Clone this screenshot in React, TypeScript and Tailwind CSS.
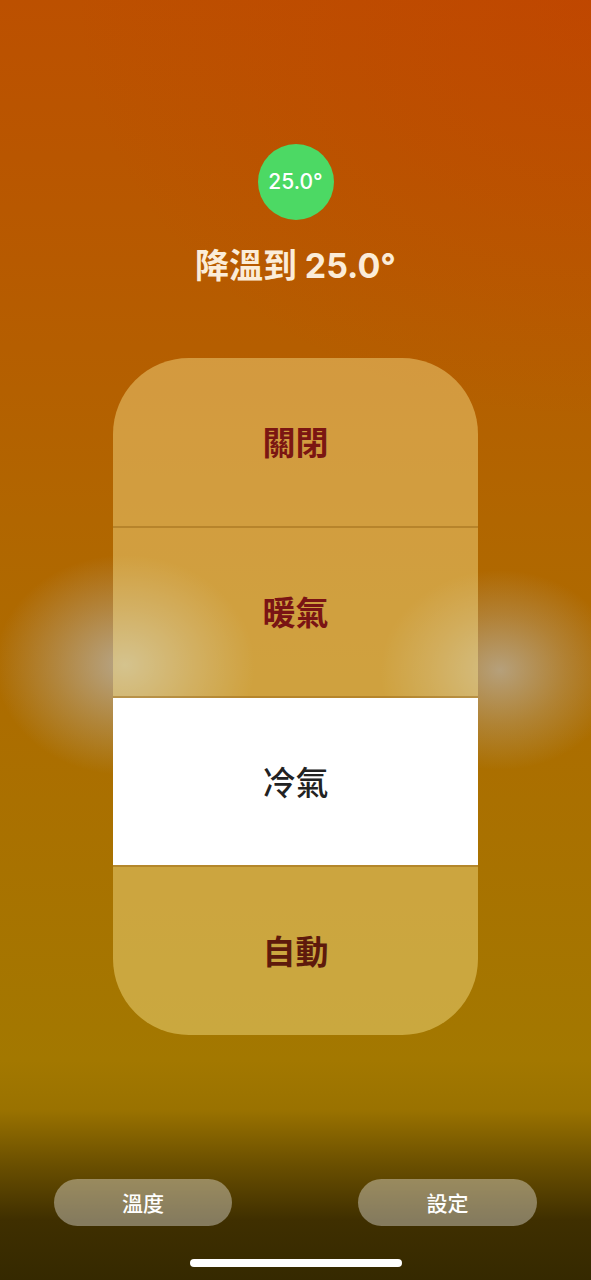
import React from 'react'

const modes = [
    { label: '關閉', active: false, h: 'h-[168px]', tone: 'text-[#7b1612]' },
    { label: '暖氣', active: false, h: 'h-[168px]', tone: 'text-[#7a1414]' },
    { label: '冷氣', active: true, h: 'h-[167px]', tone: 'text-[#222222]' },
    { label: '自動', active: false, h: 'h-[168px]', tone: 'text-[#5e1a0c]' },
]

const App = () => {
    return (
        <div className="relative w-[591px] h-[1280px] overflow-hidden flex flex-col items-center font-['Noto_Sans_CJK_TC','Noto_Sans_CJK_SC',sans-serif] bg-[radial-gradient(ellipse_130px_110px_at_125px_665px,rgba(185,180,170,0.8),rgba(185,180,170,0.35)_55%,transparent),radial-gradient(ellipse_120px_100px_at_500px_670px,rgba(185,180,170,0.72),rgba(185,180,170,0.3)_55%,transparent),radial-gradient(ellipse_520px_420px_at_591px_0px,rgba(200,50,0,0.3),transparent),linear-gradient(to_bottom,#bc5000_0px,#b75a00_260px,#b16600_520px,#aa7000_800px,#a37800_1060px,#9a7200_1110px,#6a4f00_1165px,#3f2f00_1220px,#352900_1280px)]">
            <div className="mt-[144px] w-[76px] h-[76px] rounded-full bg-[#4cd964] flex items-center justify-center">
                <span className="text-white text-[21px] font-['Inter',sans-serif] font-medium">25.0°</span>
            </div>
            <h1 className="mt-[22px] h-[44px] leading-[44px] text-[34px] font-bold text-[#fbecd8]">
                降溫到 <span className="font-['Inter',sans-serif]">25.0°</span>
            </h1>

            <div className="mt-[72px] w-[365px] h-[677px] rounded-[76px] overflow-hidden flex flex-col bg-[rgba(255,236,150,0.42)]">
                {modes.map((m, i) => (
                    <React.Fragment key={m.label}>
                        {i > 0 && <div className="h-[2px] bg-[rgba(150,100,20,0.45)]"></div>}
                        <div className={`${m.h} flex items-center justify-center ${m.active ? 'bg-white' : ''}`}>
                            <span className={`text-[33px] ${m.active ? 'font-medium' : 'font-bold'} ${m.tone}`}>{m.label}</span>
                        </div>
                    </React.Fragment>
                ))}
            </div>

            <div className="mt-[144px] w-full px-[54px] flex items-center justify-between">
                <button className="w-[178px] h-[47px] rounded-full bg-[rgba(255,255,255,0.37)] text-white text-[21px] font-medium">溫度</button>
                <button className="w-[179px] h-[47px] rounded-full bg-[rgba(255,255,255,0.37)] text-white text-[21px] font-medium">設定</button>
            </div>

            <div className="mt-[33px] w-[212px] h-[8px] rounded-full bg-white"></div>
        </div>
    )
}

export default App
